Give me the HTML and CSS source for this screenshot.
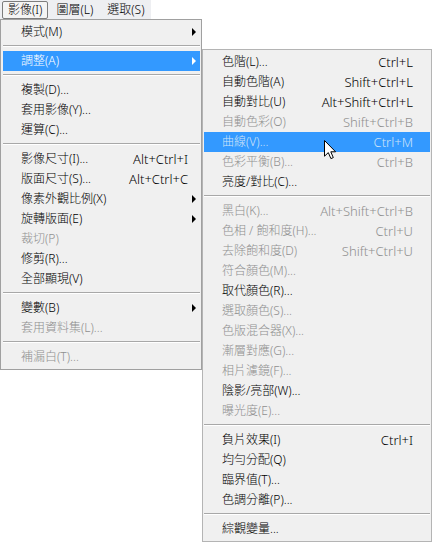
FILE: index.html
```html
<!DOCTYPE html>
<html lang="zh-Hant">
<head>
<meta charset="utf-8">
<title>影像選單</title>
<link rel="stylesheet" href="styles.css">
</head>
<body>
<div class="screen">
  <div class="menubar">
    <span class="mb-item active">影像(I)</span>
    <span class="mb-item">圖層(L)</span>
    <span class="mb-item">選取(S)</span>
  </div>
  <div class="menus">
    <div class="menu main">
      <div class="item"><span class="label">模式(M)</span><span class="key"></span><span class="arrow"></span></div>
      <div class="sep"></div>
      <div class="item hl"><span class="label">調整(A)</span><span class="key"></span><span class="arrow"></span></div>
      <div class="sep"></div>
      <div class="item"><span class="label">複製(D)...</span><span class="key"></span><span></span></div>
      <div class="item"><span class="label">套用影像(Y)...</span><span class="key"></span><span></span></div>
      <div class="item"><span class="label">運算(C)...</span><span class="key"></span><span></span></div>
      <div class="sep"></div>
      <div class="item"><span class="label">影像尺寸(I)...</span><span class="key">Alt+Ctrl+I</span><span></span></div>
      <div class="item"><span class="label">版面尺寸(S)...</span><span class="key">Alt+Ctrl+C</span><span></span></div>
      <div class="item"><span class="label">像素外觀比例(X)</span><span class="key"></span><span class="arrow"></span></div>
      <div class="item"><span class="label">旋轉版面(E)</span><span class="key"></span><span class="arrow"></span></div>
      <div class="item disabled"><span class="label">裁切(P)</span><span class="key"></span><span></span></div>
      <div class="item"><span class="label">修剪(R)...</span><span class="key"></span><span></span></div>
      <div class="item"><span class="label">全部顯現(V)</span><span class="key"></span><span></span></div>
      <div class="sep"></div>
      <div class="item"><span class="label">變數(B)</span><span class="key"></span><span class="arrow"></span></div>
      <div class="item disabled"><span class="label">套用資料集(L)...</span><span class="key"></span><span></span></div>
      <div class="sep"></div>
      <div class="item disabled"><span class="label">補漏白(T)...</span><span class="key"></span><span></span></div>
    </div>
    <div class="menu sub">
      <div class="item"><span class="label">色階(L)...</span><span class="key">Ctrl+L</span></div>
      <div class="item"><span class="label">自動色階(A)</span><span class="key">Shift+Ctrl+L</span></div>
      <div class="item"><span class="label">自動對比(U)</span><span class="key">Alt+Shift+Ctrl+L</span></div>
      <div class="item disabled"><span class="label">自動色彩(O)</span><span class="key">Shift+Ctrl+B</span></div>
      <div class="item hl dim"><span class="label">曲線(V)...</span><span class="key">Ctrl+M</span></div>
      <div class="item disabled"><span class="label">色彩平衡(B)...</span><span class="key">Ctrl+B</span></div>
      <div class="item"><span class="label">亮度/對比(C)...</span><span class="key"></span></div>
      <div class="sep"></div>
      <div class="item disabled"><span class="label">黑白(K)...</span><span class="key">Alt+Shift+Ctrl+B</span></div>
      <div class="item disabled"><span class="label">色相 / 飽和度(H)...</span><span class="key">Ctrl+U</span></div>
      <div class="item disabled"><span class="label">去除飽和度(D)</span><span class="key">Shift+Ctrl+U</span></div>
      <div class="item disabled"><span class="label">符合顏色(M)...</span><span class="key"></span></div>
      <div class="item"><span class="label">取代顏色(R)...</span><span class="key"></span></div>
      <div class="item disabled"><span class="label">選取顏色(S)...</span><span class="key"></span></div>
      <div class="item disabled"><span class="label">色版混合器(X)...</span><span class="key"></span></div>
      <div class="item disabled"><span class="label">漸層對應(G)...</span><span class="key"></span></div>
      <div class="item disabled"><span class="label">相片濾鏡(F)...</span><span class="key"></span></div>
      <div class="item"><span class="label">陰影/亮部(W)...</span><span class="key"></span></div>
      <div class="item disabled"><span class="label">曝光度(E)...</span><span class="key"></span></div>
      <div class="sep"></div>
      <div class="item"><span class="label">負片效果(I)</span><span class="key">Ctrl+I</span></div>
      <div class="item"><span class="label">均勻分配(Q)</span><span class="key"></span></div>
      <div class="item"><span class="label">臨界值(T)...</span><span class="key"></span></div>
      <div class="item"><span class="label">色調分離(P)...</span><span class="key"></span></div>
      <div class="sep"></div>
      <div class="item"><span class="label">綜觀變量...</span><span class="key"></span></div>
    </div>
  </div>
  <svg class="cursor" width="13" height="20" viewBox="0 0 13 20" aria-hidden="true">
    <path d="M0.5 0.5 L0.5 16.2 L4.3 12.6 L6.9 18.6 L9.3 17.6 L6.8 11.8 L11.6 11.8 Z" fill="#fff" stroke="#000" stroke-width="1" stroke-linejoin="miter"/>
  </svg>
</div>
</body>
</html>
```

FILE: styles.css
```css
html, body {
  margin: 0;
  padding: 0;
  background: #ffffff;
}

body {
  font-family: "Noto Sans", "Noto Sans CJK TC", sans-serif;
  font-size: 12px;
  font-weight: 300;
  color: #000;
}

.screen {
  position: relative;
  width: 432px;
  height: 542px;
  overflow: hidden;
}

.menubar {
  display: flex;
  align-items: center;
  width: 151px;
  height: 19px;
  padding-left: 2px;
  box-sizing: border-box;
  background: #eeeff2;
  gap: 2px;
}

.mb-item {
  height: 18px;
  line-height: 16px;
  padding: 0 5px;
  border: 1px solid transparent;
  border-radius: 2px;
  box-sizing: border-box;
  white-space: nowrap;
}

.mb-item.active {
  border-color: #7d7d7d;
  background: #f4f4f4;
}

.menus {
  display: flex;
  align-items: flex-start;
}

.menu {
  background: #f0f0f0;
  border: 1px solid #a0a0a0;
  box-sizing: border-box;
}

.main {
  width: 202px;
  padding: 2px 1px 2px 2px;
}

.sub {
  width: 230px;
  margin-top: 30px;
  padding: 2px 1px 2px 1px;
  border-color: #b4b4b4;
}

.item {
  display: grid;
  height: 20px;
  line-height: 20px;
  align-items: center;
  white-space: nowrap;
}

.main .item {
  grid-template-columns: 1fr auto 8px;
  padding: 0 4px 0 18px;
}

.sub .item {
  grid-template-columns: 1fr auto;
  padding: 0 17px 0 18px;
}

.key {
  font-size: 13px;
  text-align: right;
}

.disabled {
  color: #8f8f8f;
}

.hl {
  background: #3399ff;
  color: #ffffff;
}

.hl.dim {
  color: #cfe3f8;
}

.arrow {
  justify-self: end;
  width: 0;
  height: 0;
  border-top: 4px solid transparent;
  border-bottom: 4px solid transparent;
  border-left: 4px solid #000;
}

.hl .arrow {
  border-left-color: #ffffff;
}

.sep {
  height: 9px;
  display: flex;
  flex-direction: column;
  padding-top: 3px;
  box-sizing: border-box;
}

.sep::before {
  content: "";
  display: block;
  height: 1px;
  background: #a8a8a8;
}

.sep::after {
  content: "";
  display: block;
  height: 1px;
  background: #ffffff;
}

.cursor {
  position: absolute;
  left: 324px;
  top: 140px;
}
```
